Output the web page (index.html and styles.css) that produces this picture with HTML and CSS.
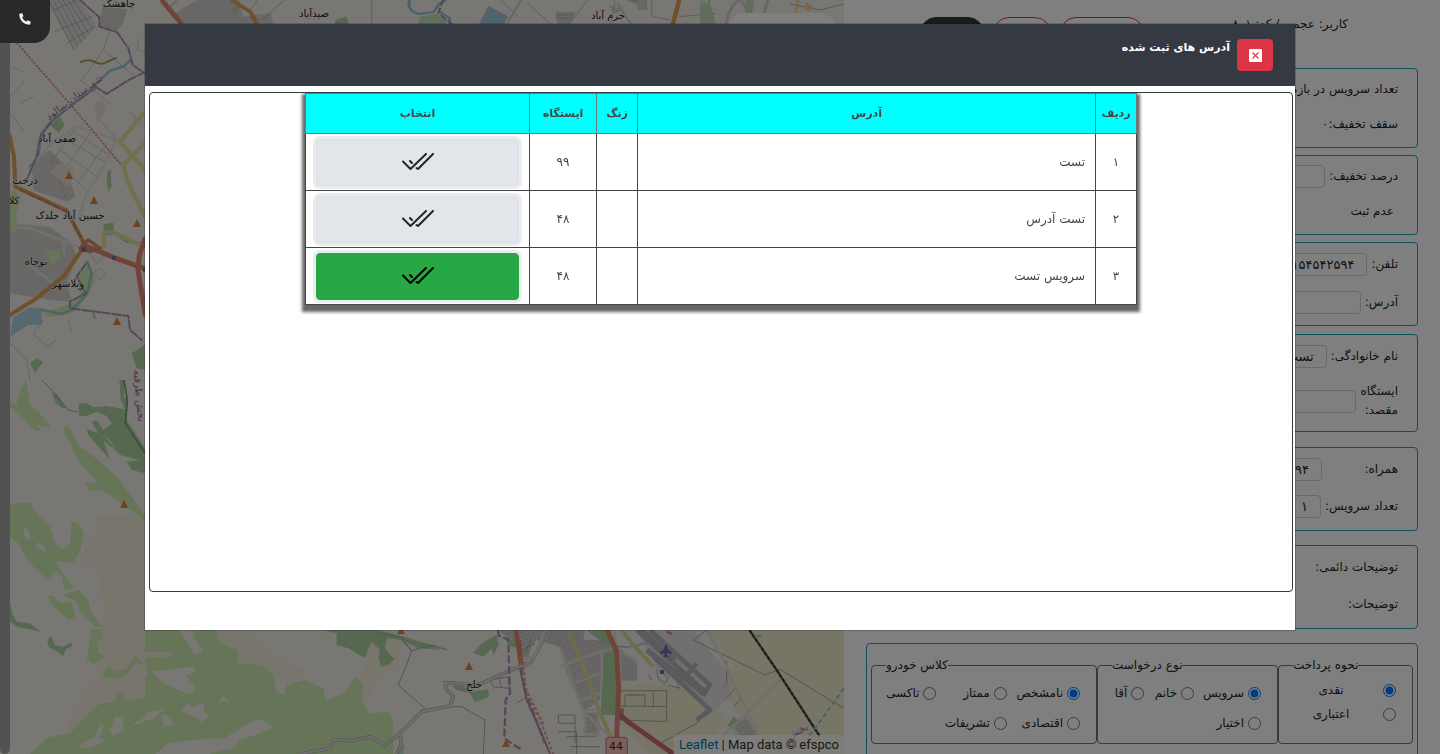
FILE: index.html
```html
<!DOCTYPE html>
<html lang="fa" dir="rtl">
<head>
<meta charset="utf-8">
<meta name="viewport" content="width=device-width, initial-scale=1">
<title>آدرس های ثبت شده</title>
<link rel="stylesheet" href="styles.css">
</head>
<body>
<div class="app">
  <section class="map">
    <svg class="map-canvas" viewBox="0 0 844 754" preserveAspectRatio="xMinYMin slice" aria-hidden="true">
      <defs>
        <pattern id="streets" width="5" height="5" patternUnits="userSpaceOnUse" patternTransform="rotate(25)">
          <rect width="5" height="5" fill="#d6d4d2"/><path d="M0 0H5M0 0V5" stroke="#bdbbb9" stroke-width="1"/>
        </pattern>
        <pattern id="blocks" width="12" height="12" patternUnits="userSpaceOnUse" patternTransform="rotate(-20)">
          <rect width="12" height="12" fill="#d2d0ce"/><path d="M0 0H12M0 0V12" stroke="#aaa8a6" stroke-width="2"/>
        </pattern>
        <path id="peak" d="M0-4L4 4H-4Z" fill="#d98440"/>
      </defs>
      <rect width="844" height="754" fill="#f2efe9"/>

      <!-- north-west -->
      <g transform="scale(.3333)" fill="none" stroke-linejoin="round" stroke-linecap="round">
        <path fill="#dedcda" d="M150 0H238L290 78L222 152L150 20Z"/>
        <path stroke="#a5a3a1" stroke-width="2" d="M150 10L222 150M162 4L234 140M176 0L246 128M190 0L256 116M204 0L268 104M218 0L280 90M160 30L230 0M165 95L275 50M200 130L284 80"/>
        <path fill="#cfcdcb" d="M308 20L382 28L370 70L345 96L296 80Z"/>
        <path fill="url(#streets)" stroke="none" d="M95 485L150 450L200 500L225 590L200 605L100 570ZM30 670L150 680L215 730L230 770L200 850L215 905L150 900L30 880Z"/>
        <path stroke="#b5b3b1" stroke-width="2" d="M30 200L66 214M30 290L76 240M60 310L100 290M30 340L75 395M330 90L310 150L245 240M310 150L400 225M240 240L330 310M215 390L350 480M200 420L320 490M180 450L290 530M160 480L260 570M230 380L160 480M270 400L200 500M320 430L240 540M205 960L215 1000M130 960L100 1000L140 1040L170 1020M30 1030L80 1080L90 1140M150 470L195 590M300 360L352 420M415 115L412 150L435 155M280 820L300 840L315 820L300 805Z"/>
        <path stroke="#a3a05e" stroke-width="6" d="M242 186Q265 176 285 186T320 186L348 174"/>
        <path fill="#add19e" stroke="none" d="M150 375L180 350L195 375L175 398ZM322 515L332 508L335 560L325 575L320 545ZM310 672L340 668L342 692L312 694ZM90 1090L110 1075L130 1085L105 1118ZM395 1060L435 1035V1110L410 1105ZM275 925L290 955L280 955Z"/>
        <path fill="#cdebb0" stroke="none" d="M30 580L48 570L62 598L48 640L52 690L30 695ZM135 755L180 750L178 780L155 796ZM235 830L260 780L285 840L262 890L220 940L150 950L128 940L170 925L240 900Z"/>
        <path fill="#eadfd4" stroke="none" d="M280 310L310 300L318 330L290 372ZM175 490L225 500L210 560L150 520Z"/>
        <path fill="#aad3df" stroke="none" d="M30 1010L40 950L90 922L125 925V975L85 975Z"/>
        <path stroke="#92c4d6" stroke-width="7" d="M390 182L370 200L330 212L300 240L270 270L212 320L160 355L125 400L115 470L90 500M125 930L185 942L215 930L262 880L275 820L262 785M310 702L345 700L380 725L435 730"/>
        <path stroke="#e2e0de" stroke-width="8" d="M50 682L95 686L245 745M350 420L230 380L185 410M350 420L300 520L262 575L240 640M105 485L160 425L185 410M192 722V762M80 790L160 850M270 760L290 790L310 770M390 338L435 380"/>
        <path stroke="#dfe09c" stroke-width="13" d="M435 335L360 425L435 510M375 490L435 430M370 495L385 550L415 610L435 650M290 755Q318 745 312 715T345 700L435 742"/>
        <path stroke="#a98fae" stroke-width="6" stroke-dasharray="24 7" d="M240 0L298 52V80L352 97L385 145L398 195L432 218L390 238L320 282L290 262L215 315L155 365L120 410L110 470L80 540M258 790L230 830L258 880L210 905V925L385 948L390 990L425 1020"/>
        <path stroke="#e08b9a" stroke-width="6" stroke-dasharray="2 9" d="M52 130L215 318L362 492"/>
        <path stroke="#dda055" stroke-width="12" d="M28 405L42 470L46 560L200 632L252 730M242 755L190 830L110 895L30 945"/>
        <path stroke="#b77f70" stroke-width="5" stroke-dasharray="18 10" d="M60 570L200 635L250 722"/>
        <path stroke="#dd8770" stroke-width="15" d="M250 735L340 772L435 806M436 715L418 765L414 810L436 945"/>
        <path stroke="#d98770" stroke-width="10" d="M240 745L265 720L300 745L270 755Z"/>
        <path fill="#6c7099" stroke="none" d="M245 742h13v13h-13zM336 768h11v11h-11zM429 804h6v11h-6z"/>
      </g>

      <!-- south-west -->
      <g transform="translate(0 380) scale(.3333)">
        <path fill="#f0edd8" d="M270 410L435 410V1122H185L215 1000L290 880L310 720L300 600L270 560L245 545L250 490L300 460Z"/>
        <path fill="#cdebb0" d="M78 0L88 50L90 75L120 100L148 135V144L120 138L90 105L110 130L122 152L105 152L45 90L30 82V65L48 75L62 25ZM190 140Q205 135 215 155L240 200L295 240L360 300L390 345L435 405V422L385 385L335 350L305 330L270 332L255 306L295 310L240 250L220 215L212 185L190 158ZM30 372L88 367L115 405L150 440L165 490Q190 520 210 490L215 425Q235 420 252 462L242 510L220 548L170 544L172 560L185 575L222 625L195 632L185 590L172 575L141 600L80 540L55 490L30 472ZM145 648Q160 640 180 668L215 665L228 718L205 720L150 670ZM188 646L235 628L265 660L275 700L308 738L288 742L240 695L232 665ZM275 748H302L311 772L292 790L295 820L315 828L280 854L260 836ZM304 890L325 858L350 875L380 865L405 822L435 860V1122H90L145 1072L210 1060L255 1010L300 970L340 965L360 935L385 965L435 950V860L410 845L380 885L345 898Z"/>
        <path fill="#f2efe9" d="M70 450L78 438L92 470L88 482L75 475ZM103 498L120 485L133 500L135 518ZM232 1102L285 1070L300 1035H312L298 1072L316 1084L270 1104ZM330 1050L345 1010L370 1012V1050L340 1068ZM388 1040L435 1010V1025L400 1035Z"/>
        <path fill="#add19e" d="M154 35L172 45L198 80L190 87L168 70ZM236 72L260 68L280 82L320 78L375 88L362 60L358 0H372V50L384 65L380 120L400 150L435 205V280L395 270L380 245L420 240L360 225L330 180L310 165L345 205L375 230L350 215L310 180L330 238L290 195L262 160V148L295 160L275 125L290 120L310 150L335 130L320 108L290 95L260 108H238ZM30 668L36 698L50 726L90 730L122 756L90 748L55 742L30 725ZM142 780L154 768L165 795L185 800L215 788L218 798L198 808L188 830L180 820L145 800Z"/>
        <path d="M125 0L160 35L205 90L235 97" fill="none" stroke="#a7a3a5" stroke-width="3"/>
        <path d="M372 0L382 60L376 130L435 220" fill="none" stroke="#719e73" stroke-width="5"/>
      </g>

      <!-- south -->
      <g transform="translate(145 620) scale(.3333)" stroke-linejoin="round">
        <path fill="#f0edd8" d="M0 30H310L350 80L485 155L450 190H400L360 150L280 125L230 70L170 30ZM500 30H570V75ZM645 170L690 40H770L750 150L700 170L665 270L640 240Z"/>
        <path fill="#cdebb0" d="M0 30H105L150 105L175 95L145 50V30H210L220 65L278 90V128L350 135L385 165L395 215L418 225L425 195L480 180L535 205L542 240L598 220L630 172L655 190L652 245L672 280L735 275L745 310V402H0Z"/>
        <path fill="#f2efe9" d="M20 155L60 150L145 140L155 155L120 165L150 200L140 222L110 215L50 185ZM0 130L8 160L0 170ZM218 250L235 228L258 252L238 244ZM110 275L125 250L145 262L180 248L175 270L193 288L170 306L150 290ZM0 280L60 266L20 300L0 300ZM48 285L60 282L90 312L58 318ZM30 402L70 370L160 358L240 355L310 310L345 297L386 322L330 345L285 360L260 385L190 402Z"/>
        <path fill="#f0edd8" d="M0 95L85 98L60 112L0 115Z"/>
        <path fill="#add19e" d="M535 30L700 30L760 45L870 78L888 90L820 84L770 60L725 55L720 85L748 118L735 132L708 140L700 110L705 90L680 65L660 115L610 85L575 75V40ZM985 98L1010 70L1055 45L1062 75L1045 105L1040 85L1015 110ZM920 198L950 195L980 215L1030 208L1032 230L990 246L975 220L935 210ZM1080 58H1130V82H1100Z"/>
        <path fill="#b5e3c5" d="M762 375H778L775 402H755ZM1180 30H1200V45H1180Z"/>
        <path fill="url(#blocks)" d="M1060 30H1190L1165 75L1085 52ZM1128 50L1165 60L1150 110L1125 115Z"/>
        <g fill="none">
          <path stroke="#aaa6a5" stroke-width="3" d="M770 50L800 95L760 195L840 265M915 260H950L1020 300L1015 402M700 40L760 50L800 92L860 75L908 90M1035 180L1090 170L1092 205L1045 200ZM1062 172L1070 205M1115 250L1145 230M1130 90L1170 70M1140 100L1160 55"/>
          <path stroke="#b5b2b0" stroke-width="11" d="M465 402L555 385L565 360L620 362L675 350L720 375L765 340L830 275L915 258L925 230L905 210L900 188L1000 195L1080 158L1160 125L1200 50M765 340L768 375L755 402"/>
          <path stroke="#deddda" stroke-width="6" d="M465 402L555 385L565 360L620 362L675 350L720 375L765 340L830 275L915 258L925 230L905 210L900 188L1000 195L1080 158L1160 125L1200 50M765 340L768 375L755 402"/>
          <path stroke="#dd8770" stroke-width="14" d="M1113 30L1128 135"/>
          <path stroke="#a98fae" stroke-width="7" stroke-dasharray="24 8" d="M1058 30L1062 48L1090 58L1095 220L1082 240L1078 355L1130 390M1125 110L1140 210L1200 370"/>
          <path stroke="#e0a090" stroke-width="5" stroke-dasharray="9 7" d="M1135 125L1145 210L1200 320"/>
        </g>
      </g>

      <!-- south-east -->
      <g transform="translate(520 620) scale(.3333)" stroke-linejoin="round">
        <path fill="#efebca" d="M560 30H972V402H730L650 280L600 190L640 140ZM300 200L440 190L560 230L620 300L530 402H390L300 320Z"/>
        <path fill="#e2dfe0" d="M360 50L440 30H520L640 180L625 235L540 310L520 300L570 265L410 140Z"/>
        <path fill="url(#blocks)" d="M45 30H195L190 60H260L290 95L245 100L240 240L190 275L140 160L118 80L50 60ZM640 320L680 290L712 345L660 350ZM197 278H232V340H197Z"/>
        <path fill="#cdcbca" d="M300 85L352 130V182H305Z"/>
        <path fill="#add19e" d="M200 30H270L285 80L245 62ZM250 100L282 95L295 140L290 285H242ZM622 318L640 290L655 300L632 320Z"/>
        <path fill="#a9d28c" d="M487 172L500 170L554 222L545 230Z"/>
        <g fill="none">
          <path stroke="#aaa8a5" stroke-width="3" d="M300 212H440V305L300 300M300 258L440 260M355 225H315V260M375 225V260M400 212V258M330 225H375M115 285H165V310H115ZM115 335H170V402M140 350H230M150 380H240M165 310V370M560 30L520 60L735 165L780 148L972 265M620 120V190L610 200M420 370L530 310L570 260M445 195L480 205L470 190M620 235L650 200L660 240L640 260"/>
          <path stroke="#dedcda" stroke-width="8" d="M0 125L45 105L75 30M118 80L190 275L270 350M118 140L240 95L285 85L350 122M165 190L240 160M185 240L242 220M195 270V345H235V270H195M245 100V190M282 30L290 95M560 30L610 120L683 278M780 180L683 278L600 355M683 278L715 340M640 320L660 370"/>
          <path stroke="#b4b2b6" stroke-width="14" d="M390 30L570 195L555 215L350 30M505 160L530 130M400 110L570 270L530 300"/>
          <path stroke="#b5b3bb" stroke-width="16" d="M380 90L560 225M365 30L465 120"/>
          <path stroke="#a8cfd6" stroke-width="6" d="M205 30L260 75L320 82L385 68"/>
          <path stroke="#dadb96" stroke-width="12" d="M145 30L190 140L240 280L275 355M305 30L340 75L400 140"/>
          <path stroke="#dd8770" stroke-width="15" d="M262 30L290 95L296 200L288 402"/>
          <path stroke="#d98770" stroke-width="22" d="M300 265V300"/>
          <path stroke="#c96b78" stroke-width="15" d="M300 285L330 310L460 402"/>
          <path stroke="#dd8770" stroke-width="8" d="M0 60L5 130M440 35L455 42"/>
          <path stroke="#e0a090" stroke-width="6" stroke-dasharray="9 7" d="M0 110L10 200L60 300L100 402"/>
          <path stroke="#a98fae" stroke-width="6" d="M0 145L20 240L60 330L90 402"/>
          <path stroke="#6e6a6e" stroke-width="7" d="M688 30L770 150L900 350"/>
          <path stroke="#3a3638" stroke-width="6" stroke-dasharray="12 4" d="M688 30L770 150L900 350"/>
          <path stroke="#8fc3cf" stroke-width="6" stroke-dasharray="14 9" d="M972 205L885 325L865 350M710 50L725 45"/>
          <path stroke="#cdcbd2" stroke-width="6" d="M410 145L415 175L435 190L445 175L430 160M385 165L395 180"/>
        </g>
        <path fill="#7b5fb0" d="M437 75Q442 75 442 86L456 98V103L442 98L441 106L447 111H428L434 106L433 98L420 103V98L433 86Q433 75 437 75Z"/>
        <path fill="#666a9c" d="M420 150h12v12h-12z"/>
        <rect x="258" y="352" width="64" height="56" rx="6" fill="#f3c0b4" stroke="#bd7c72" stroke-width="3"/>
      </g>

      <!-- north -->
      <g transform="scale(.459 .3333)" stroke-linejoin="round">
        <path fill="url(#streets)" d="M380 40L430 0H520L530 50L590 40L595 72H400L385 60ZM1210 35L1255 35L1240 72H1215ZM1385 0H1410V30H1390ZM1325 15L1360 30L1340 40Z"/>
        <path fill="#add19e" d="M500 30L525 15L515 40ZM730 60L755 50L760 72H730ZM1365 0H1390L1385 12Z"/>
        <path fill="#bde0b0" d="M915 50L950 42L975 60L970 72H910ZM1530 0L1550 20L1560 72H1535Z"/>
        <path fill="#9fcbdc" stroke="#c9b5d0" stroke-width="4" d="M1065 20L1105 50L1095 75H1045Z"/>
        <g fill="none">
          <path stroke="#b0aeab" stroke-width="2" d="M560 0L540 40M620 0L570 60M810 0V72M1090 0L1130 50M1150 10L1200 72M1280 0L1240 72M1420 0V50L1460 60M1340 0L1330 72M1210 45H1250M1210 55H1250M1480 50L1560 40"/>
          <path stroke="#cdccca" stroke-width="5" d="M385 0L365 30M1135 0L1105 72M1345 10L1375 72M1545 0V72"/>
          <path stroke="#dd8770" stroke-width="12" d="M352 0L396 72"/>
          <path stroke="#dda055" stroke-width="10" d="M505 0L545 35L560 72M1480 0L1466 72"/>
          <path stroke="#8ec2d3" stroke-width="6" d="M892 0Q885 35 915 42L945 35L958 10L972 0M958 35L980 55V72"/>
          <path stroke="#a98fae" stroke-width="5" stroke-dasharray="18 6" d="M965 0L955 40L985 72"/>
        </g>
      </g>
      <g fill="none">
        <path fill="#bfdcb0" d="M700 0L710 24H700ZM745 0H754L751 24ZM781 24L785 12L794 24Z"/>
        <path stroke="#d2d0ce" stroke-width="3" d="M726 24Q730 4 740 0Q752 10 744 24M700 10L714 24M768 0L760 24"/>
        <path stroke="#efe0a6" stroke-width="4" d="M798 0L794 24"/>
        <path stroke="#b0aeac" d="M790 4L820 10L844 4"/>
        <path fill="#f0cfa0" d="M806 2L814 8L808 12L804 8Z"/>
      </g>

      <g>
        <use href="#peak" x="69" y="175"/><use href="#peak" x="94" y="200"/><use href="#peak" x="137" y="223"/>
        <use href="#peak" x="117" y="321"/><use href="#peak" x="124" y="504"/><use href="#peak" x="401" y="630"/>
        <use href="#peak" x="469" y="666"/><use href="#peak" x="506" y="743"/>
      </g>
      <g class="places">
        <text x="119" y="7">چاهشک</text>
        <text x="314" y="17">صیدآباد</text>
        <text x="608" y="19">خرم آباد</text>
        <text x="57" y="142">صفی آباد</text>
        <text x="25" y="184">درخت</text>
        <text x="14" y="204">کلا</text>
        <text x="70" y="219">حسین آباد جلدک</text>
        <text x="36" y="265">نوچاه</text>
        <text x="68" y="287">ویلاشهر</text>
        <text x="474" y="688">خلج</text>
        <text class="district" transform="translate(76 100) rotate(-37)">شهرستان بینالود</text>
        <text class="district" transform="translate(136 396) rotate(85)">بخش طرقبه</text>
        <text class="district" transform="translate(799 734) rotate(-28)">بخش</text>
        <text class="shield" x="616" y="750">44</text>
      </g>
    </svg>
    <div class="map-control"></div>
    <p class="attribution" dir="ltr"><a href="#leaflet">Leaflet</a> | Map data © efspco</p>
    <div class="rail"></div>
  </section>

  <main class="panel">
    <header class="panel-head">
      <span class="user">کاربر: عجمی / کد: ۸۰۱</span>
      <span class="pills"><span class="pill wide"></span><span class="pill"></span><span class="pill dark"></span></span>
    </header>

    <section class="card compact">
      <div class="row">تعداد سرویس در بازه:</div>
      <div class="row">سقف تخفیف:۰</div>
    </section>
    <section class="card compact">
      <div class="row"><label for="discount">درصد تخفیف:</label><input id="discount" type="text"></div>
      <div class="row inset">عدم ثبت</div>
    </section>
    <section class="card">
      <div class="row"><label for="phone">تلفن:</label><input id="phone" type="text" value="۰۵۱۵۴۵۴۲۵۹۴"></div>
      <div class="row"><label for="address">آدرس:</label><input id="address" type="text"></div>
    </section>
    <section class="card">
      <div class="row"><label for="family">نام خانوادگی:</label><input id="family" type="text" value="تست"></div>
      <div class="row"><label class="stacked" for="station">ایستگاه مقصد:</label><input id="station" type="text"></div>
    </section>
    <section class="card spaced">
      <div class="row"><label class="mobile" for="mobile">همراه:</label><input id="mobile" type="text" value="۰۹۱۵۴۵۴۲۵۹۴"></div>
      <div class="row"><label for="count">تعداد سرویس:</label><input id="count" type="text" value="۱"></div>
    </section>
    <section class="card spaced">
      <div class="row">توضیحات دائمی:</div>
      <div class="row">توضیحات:</div>
    </section>
    <section class="card spaced options">
      <fieldset class="pay">
        <legend>نحوه پرداخت</legend>
        <label><input type="radio" name="pay" checked><span>نقدی</span></label>
        <label><input type="radio" name="pay"><span>اعتباری</span></label>
      </fieldset>
      <fieldset class="request">
        <legend>نوع درخواست</legend>
        <div class="choices">
          <label><input type="radio" name="kind" checked>سرویس</label>
          <label><input type="radio" name="kind">خانم</label>
          <label><input type="radio" name="kind">آقا</label>
          <label><input type="radio" name="kind">اختیار</label>
        </div>
      </fieldset>
      <fieldset class="vehicle">
        <legend>کلاس خودرو</legend>
        <div class="choices">
          <label><input type="radio" name="class" checked>نامشخص</label>
          <label><input type="radio" name="class">ممتاز</label>
          <label><input type="radio" name="class">تاکسی</label>
          <label><input type="radio" name="class">اقتصادی</label>
          <label><input type="radio" name="class">تشریفات</label>
        </div>
      </fieldset>
    </section>
  </main>
</div>

<div class="overlay">
  <div class="modal" role="dialog" aria-modal="true" aria-labelledby="modal-title">
    <header class="modal-head">
      <button class="close" type="button" aria-label="بستن">
        <svg width="13" height="13" viewBox="0 0 13 13" aria-hidden="true"><rect width="13" height="13" rx="1" fill="#fff"/><path d="M3.500 3.500l6 6m0-6l-6 6" stroke="#dc3545" stroke-width="1.100"/></svg>
      </button>
      <h1 id="modal-title">آدرس های ثبت شده</h1>
    </header>
    <div class="modal-body">
      <div class="frame">
        <table class="addresses">
          <colgroup><col class="c-index"><col><col class="c-ring"><col class="c-station"><col class="c-pick"></colgroup>
          <thead><tr><th>ردیف</th><th>آدرس</th><th>زنگ</th><th>ایستگاه</th><th>انتخاب</th></tr></thead>
          <tbody>
            <tr><td>۱</td><td class="addr">تست</td><td></td><td>۹۹</td><td class="pick"><button type="button" aria-label="انتخاب ۱"><svg class="checks" viewBox="0 0 32 18" aria-hidden="true"><path d="M1 8.500L8.500 16L24 1M31 1L16 16L14.500 15M8 8L10 10"/></svg></button></td></tr>
            <tr><td>۲</td><td class="addr">تست آدرس</td><td></td><td>۴۸</td><td class="pick"><button type="button" aria-label="انتخاب ۲"><svg class="checks" viewBox="0 0 32 18" aria-hidden="true"><path d="M1 8.500L8.500 16L24 1M31 1L16 16L14.500 15M8 8L10 10"/></svg></button></td></tr>
            <tr><td>۳</td><td class="addr">سرویس تست</td><td></td><td>۴۸</td><td class="pick"><button class="chosen" type="button" aria-label="انتخاب ۳"><svg class="checks" viewBox="0 0 32 18" aria-hidden="true"><path d="M1 8.500L8.500 16L24 1M31 1L16 16L14.500 15M8 8L10 10"/></svg></button></td></tr>
          </tbody>
        </table>
      </div>
    </div>
  </div>
</div>
<button class="call" type="button" aria-label="تماس">
  <svg width="12" height="12" viewBox="0 0 12 12" aria-hidden="true"><path fill="#eee" d="M.6.8L2.800.2Q3.200.1 3.400.5L4.400 2.900Q4.500 3.300 4.200 3.600L3.100 4.600Q4.400 7.200 7.200 8.700L8.300 7.500Q8.600 7.200 9 7.400L11.400 8.500Q11.800 8.700 11.700 9.100L11.200 11.300Q11 11.800 10.500 11.800Q6 11.700 3.100 8.700Q.2 5.700.2 1.400Q.2.900.6.8Z"/></svg>
</button>
</body>
</html>
```
FILE: styles.css
```css
*, *::before, *::after { box-sizing: border-box; }

body {
  margin: 0;
  overflow: hidden;
  background: #fff;
  color: #212529;
  font: 12px/19px "DejaVu Sans", sans-serif;
}

button, input { font: inherit; color: inherit; }

.app {
  display: grid;
  grid-template-columns: minmax(0, 596fr) minmax(0, 844fr);
  height: 100vh;
}

/* map */
.map {
  position: relative;
  overflow: hidden;
  order: 2;
}
.map-canvas { display: block; width: 100%; height: 100%; }
.places { font-size: 10px; text-anchor: middle; fill: #222; stroke: #f2efe9; stroke-width: 1px; paint-order: stroke; }
.places .district { fill: #8a6a92; }
.places .shield { font: 11px "DejaVu Sans", sans-serif; fill: #5c1f1a; stroke: none; }
.map-control {
  position: absolute;
  top: 13px;
  right: 7px;
  width: 110px;
  height: 40px;
  border-radius: 18px;
  background: #fff;
}
.attribution {
  position: absolute;
  right: 0;
  bottom: 0;
  margin: 0;
  padding: 0 5px;
  background: rgba(255, 255, 255, .7);
  color: #333;
  font: 13px/19px Roboto, sans-serif;
}
.attribution a { color: #0078a8; text-decoration: none; }
.rail {
  position: absolute;
  top: 0;
  bottom: 0;
  left: 0;
  width: 10px;
  border-radius: 0 0 5px 5px;
  background: #a5a5a5;
}

/* order form */
.panel { padding: 0 22px; overflow: hidden; }
.panel-head {
  display: flex;
  justify-content: space-between;
  height: 68px;
  padding: 15px 70px 0 54px;
}
.pills { display: flex; gap: 9px; padding-top: 2px; }
.pill { width: 58px; height: 32px; border: 1px solid #dc3545; border-radius: 16px; }
.pill.wide { width: 84px; }
.pill.dark { width: 64px; border-color: #343a40; background: #343a40; }

.card {
  display: flex;
  flex-direction: column;
  gap: 14px;
  margin-bottom: 8px;
  padding: 9px 19px 11px;
  border: 1px solid #17a2b8;
  border-radius: 4px;
}
.card.compact { gap: 11px; margin-bottom: 7px; padding: 8px 19px 11px; }
.card.spaced { margin-top: 15px; gap: 13px; margin-bottom: 14px; padding-bottom: 12px; }
.card.spaced + .card.spaced { margin-top: 0; }
.row { display: flex; align-items: center; gap: 4px; min-height: 24px; white-space: nowrap; }
.row.inset { padding-right: 4px; }
.row input {
  width: 160px;
  height: 23px;
  padding: 0 12px;
  border: 1px solid #ced4da;
  border-radius: 4px;
  background: #fff;
  font-size: 13px;
}
.stacked { width: 38px; white-space: normal; }
.mobile { width: 72px; }

.card.options {
  display: grid;
  grid-template-columns: 135fr 181fr 226fr;
  gap: 0;
  padding: 12px 4px 20px;
}
fieldset {
  min-width: 0;
  height: 88px;
  margin: 0;
  padding: 6px 16px 0 14px;
  border: 1px solid #6c757d;
  border-radius: 4px;
}
legend { margin-right: auto; padding: 0; }
fieldset label { display: flex; align-items: center; gap: 4px; white-space: nowrap; }
fieldset input { width: 13px; height: 13px; margin: 0; }
.pay { padding-top: 3px; }
.pay label { height: 24px; }
.pay span { flex: 1; padding-right: 10px; text-align: center; }
.choices { display: grid; row-gap: 6px; }
.choices label { height: 24px; }
.request .choices { grid-template-columns: 66fr 49fr 32fr; }
.vehicle .choices { grid-template-columns: 74fr 71fr 49fr; }

/* dialog */
.overlay {
  position: fixed;
  inset: 0;
  padding: 24px 16px;
  overflow: auto;
  background: rgba(0, 0, 0, .5);
}
.modal {
  max-width: 1150px;
  margin: 0 auto;
  background: #fff;
  box-shadow: 0 0 0 1px rgba(0, 0, 0, .2);
}
.modal-head {
  display: flex;
  align-items: flex-start;
  gap: 7px;
  padding: 15px 22px;
  background: #353942;
  color: #fff;
}
.modal-head h1 { margin: 0; font-size: 11px; line-height: 17px; }
.close {
  display: grid;
  place-items: center;
  width: 36px;
  height: 32px;
  padding: 0;
  border: 0;
  border-radius: 4px;
  background: #dc3545;
}
.modal-body { padding: 6px 2px 38px 4px; }
.frame {
  height: 500px;
  overflow: auto;
  border: 1px solid #343a40;
  border-radius: 4px;
}
.addresses {
  width: 832px;
  max-width: 100%;
  margin: 0 auto;
  border-collapse: collapse;
  table-layout: fixed;
  color: #444;
  text-align: center;
  box-shadow: 0 4px 3px 3px #666;
  background: #fff;
}
.c-index, .c-ring { width: 41px; }
.c-station { width: 67px; }
.c-pick { width: 224px; }
.addresses th, .addresses td { padding: 0; border: 1px solid #444; }
.addresses th { height: 40px; border-color: #777; background: #0ff; font-size: 11px; }
.addresses td { height: 57px; }
.addresses .addr { padding: 0 10px; text-align: right; }
.addresses .pick { padding: 0 10px; }
.pick button {
  display: grid;
  place-items: center;
  width: 100%;
  height: 47px;
  padding: 0;
  border: 1px solid #dae0e5;
  border-radius: 4px;
  background: #e2e6ea;
  color: #212529;
  box-shadow: 0 0 0 3px #ebecee;
}
.pick .chosen { border-color: #28a745; background: #28a745; color: #000; }
.checks { width: 32px; height: 18px; fill: none; stroke: currentColor; stroke-width: 2; stroke-linecap: round; stroke-linejoin: round; }

.call {
  position: fixed;
  top: 0;
  left: 0;
  display: grid;
  place-items: center;
  width: 50px;
  height: 43px;
  padding: 0 0 6px;
  border: 0;
  border-radius: 0 0 16px 0;
  background: #282828;
}
```
